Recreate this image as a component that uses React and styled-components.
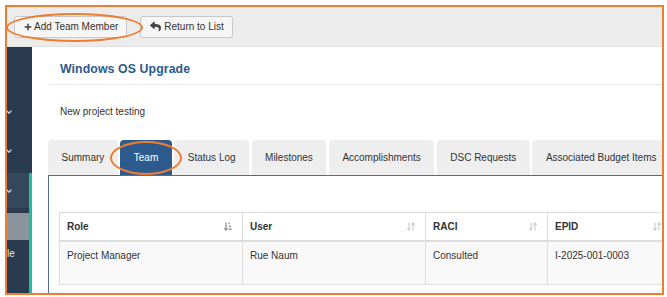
import React from 'react';
import styled, { createGlobalStyle } from 'styled-components';
import { FaPlus, FaReply } from 'react-icons/fa';

const ORANGE = '#ed7d31';
const BLUE = '#2e5b8e';
const FONT = '"Liberation Sans", Arial, sans-serif';

const Global = createGlobalStyle`
  html, body { margin: 0; padding: 0; background: #fff; }
  body { font-family: ${FONT}; }
`;

const Stage = styled.div`
  position: relative;
  margin: 5px;
  width: 659px;
  height: 290px;
`;

const Frame = styled.div`
  box-sizing: border-box;
  width: 100%;
  height: 100%;
  border: 2px solid ${ORANGE};
  overflow: hidden;
  display: flex;
  flex-direction: column;
  background: #fff;
`;

const Callout = styled.div`
  position: absolute;
  left: ${(p) => p.x}px;
  top: ${(p) => p.y}px;
  width: ${(p) => p.w}px;
  height: ${(p) => p.h}px;
  box-sizing: border-box;
  border: 2px solid ${ORANGE};
  border-radius: 50%;
  pointer-events: none;
`;

const Toolbar = styled.div`
  flex: none;
  height: 39px;
  background: #ececec;
  border-bottom: 1px solid #dfe3e6;
  display: flex;
  align-items: center;
  gap: 13px;
  padding-left: 7px;
`;

const Button = styled.button`
  height: 22px;
  box-sizing: border-box;
  display: inline-flex;
  align-items: center;
  gap: 2px;
  padding: 0 8px 0 9px;
  background: #f6f6f6;
  border: 1px solid #c8c8c8;
  border-radius: 3px;
  font: 10px ${FONT};
  color: #333;
  svg { color: #444; }
`;

const Body = styled.div`
  flex: 1;
  display: flex;
  min-height: 0;
`;

const Sidebar = styled.nav`
  flex: none;
  width: 25px;
  box-sizing: border-box;
  padding-top: 46px;
  background: #2b3b4f;
  display: flex;
  flex-direction: column;
`;

const SubMenu = styled.div`
  flex: 1;
  margin-top: 2px;
  border-right: 3px solid #1fbf9c;
  display: flex;
  flex-direction: column;
`;

const NavItem = styled.div`
  flex: none;
  height: ${(p) => p.h}px;
  margin-top: ${(p) => p.mt || 0}px;
  background: ${(p) => p.bg || 'transparent'};
  display: flex;
  align-items: center;
  color: #e4e9ee;
  font: 10px ${FONT};
  overflow: hidden;
  white-space: nowrap;
`;

const Chevron = () => (
  <svg width="6" height="4" viewBox="0 0 6 4" style={{ marginLeft: -1 }}>
    <path d="M0.6 0.6 L3 3.2 L5.4 0.6" fill="none" stroke="#cfd6dd" strokeWidth="1.4" />
  </svg>
);

const Content = styled.main`
  flex: 1;
  min-width: 0;
  padding-left: 16px;
  display: flex;
  flex-direction: column;
`;

const TitleBar = styled.div`
  flex: none;
  box-sizing: border-box;
  height: 38px;
  padding: 15px 0 0 12px;
  border-bottom: 1px solid #e6e6e6;
`;

const Title = styled.h1`
  margin: 0;
  font: bold 12.3px/15px ${FONT};
  color: #2b5a8b;
  letter-spacing: 0.1px;
`;

const Description = styled.p`
  margin: 21px 0 0;
  padding-left: 12px;
  font: 10px/12px ${FONT};
  color: #333;
`;

const TabRow = styled.div`
  flex: none;
  margin-top: 22px;
  height: 36px;
  box-sizing: border-box;
  display: flex;
  gap: 2.5px;
  border-bottom: 1px solid #4d6e9b;
`;

const Tab = styled.div`
  flex: none;
  padding: 0 13.5px;
  display: flex;
  align-items: center;
  border-radius: 4px 4px 0 0;
  background: ${(p) => (p.active ? BLUE : '#eeeeee')};
  color: ${(p) => (p.active ? '#fff' : '#333')};
  font: 10px ${FONT};
  white-space: nowrap;
`;

const Panel = styled.div`
  flex: 1;
  border-left: 1px solid #4d6e9b;
  padding: 36px 0 0 10px;
`;

const Grid = styled.div`
  display: grid;
  grid-template-columns: 183px 183px 122px 124px;
  width: 612px;
  border-top: 1px solid #dddddd;
  border-left: 1px solid #dddddd;
`;

const HeadCell = styled.div`
  box-sizing: border-box;
  height: 29px;
  padding: 0 10px 0 7px;
  display: flex;
  align-items: center;
  justify-content: space-between;
  background: #fff;
  border-right: 1px solid #dddddd;
  border-bottom: 2px solid #dddddd;
  font: bold 10px ${FONT};
  color: #333;
`;

const Cell = styled.div`
  box-sizing: border-box;
  height: 43px;
  padding: 8px 7px 0;
  background: #f9f9f9;
  border-right: 1px solid #dddddd;
  border-bottom: 1px solid #dddddd;
  font: 10px/12px ${FONT};
  color: #333;
`;

const SortIcon = ({ active }) =>
  active ? (
    <svg width="8" height="9" viewBox="0 0 8 9">
      <g stroke="#8a8a8a" strokeWidth="1.2" fill="none">
        <path d="M2 0.5 V8" />
        <path d="M0.4 6 L2 8.2 L3.6 6" />
      </g>
      <g fill="#8a8a8a">
        <rect x="4.6" y="0.8" width="1.4" height="1.3" />
        <rect x="4.6" y="3.6" width="2.3" height="1.3" />
        <rect x="4.6" y="6.6" width="3.2" height="1.3" />
      </g>
    </svg>
  ) : (
    <svg width="8" height="9" viewBox="0 0 8 9">
      <g stroke="#cfcfcf" strokeWidth="1.2" fill="none">
        <path d="M2 0.5 V8" />
        <path d="M0.4 6 L2 8.2 L3.6 6" />
        <path d="M6 1 V8.5" />
        <path d="M4.4 3 L6 0.8 L7.6 3" />
      </g>
    </svg>
  );

const tabs = ['Summary', 'Team', 'Status Log', 'Milestones', 'Accomplishments', 'DSC Requests', 'Associated Budget Items'];
const columns = [
  { label: 'Role', active: true },
  { label: 'User' },
  { label: 'RACI' },
  { label: 'EPID' },
];
const rows = [['Project Manager', 'Rue Naum', 'Consulted', 'I-2025-001-0003']];

export default function App() {
  return (
    <>
      <Global />
      <Stage>
        <Frame>
          <Toolbar>
            <Button>
              <FaPlus size={8} />
              Add Team Member
            </Button>
            <Button>
              <FaReply size={11} style={{ marginRight: 1 }} />
              Return to List
            </Button>
          </Toolbar>
          <Body>
            <Sidebar>
              <NavItem h={38}><Chevron /></NavItem>
              <NavItem h={40}><Chevron /></NavItem>
              <SubMenu>
                <NavItem h={35} bg="#34475b"><Chevron /></NavItem>
                <NavItem h={27} mt={5} bg="#8b949c" />
                <NavItem h={26}>le</NavItem>
              </SubMenu>
            </Sidebar>
            <Content>
              <TitleBar>
                <Title>Windows OS Upgrade</Title>
              </TitleBar>
              <Description>New project testing</Description>
              <TabRow>
                {tabs.map((t) => (
                  <Tab key={t} active={t === 'Team'}>{t}</Tab>
                ))}
              </TabRow>
              <Panel>
                <Grid>
                  {columns.map((c) => (
                    <HeadCell key={c.label}>
                      <span>{c.label}</span>
                      <SortIcon active={c.active} />
                    </HeadCell>
                  ))}
                  {rows.map((r) => r.map((v, i) => <Cell key={i}>{v}</Cell>))}
                </Grid>
              </Panel>
            </Content>
          </Body>
        </Frame>
        <Callout x={1} y={8} w={137} h={29} />
        <Callout x={105} y={136} w={72} h={34} />
      </Stage>
    </>
  );
}
